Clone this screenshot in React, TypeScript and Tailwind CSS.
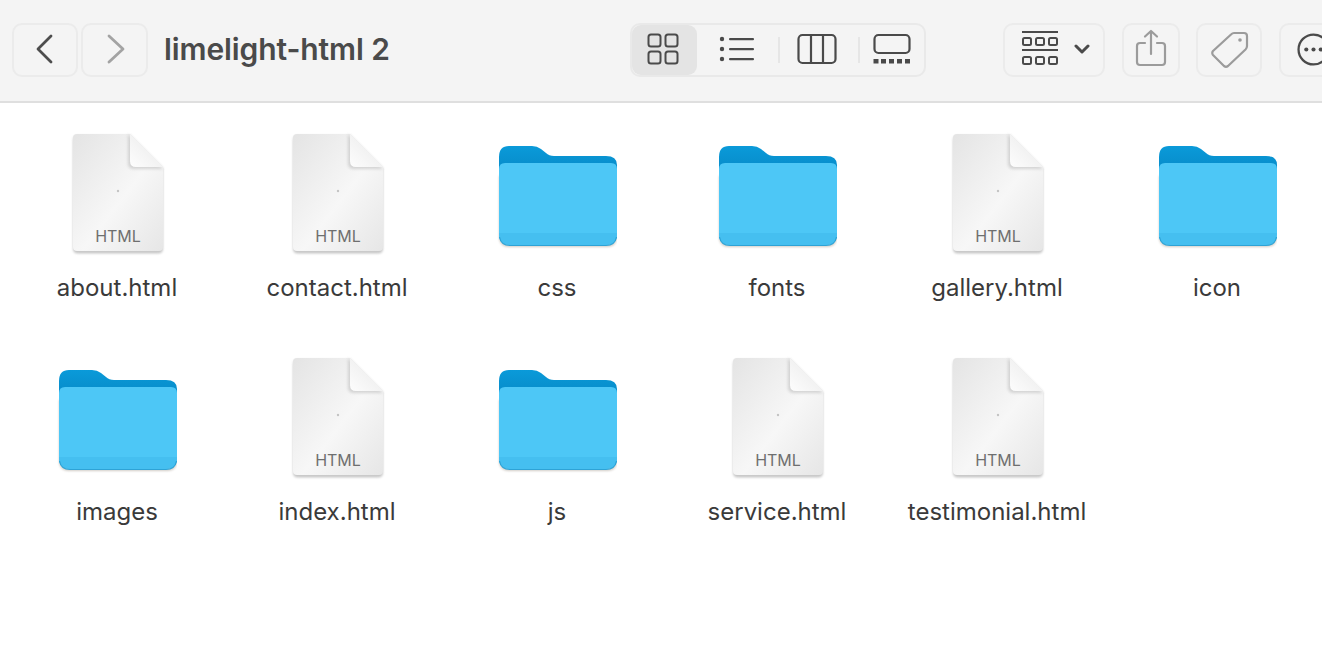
const font = "font-['Inter','Liberation_Sans',sans-serif]"

type Item = { name: string; kind: "file" | "folder" }

const items: Item[] = [
  { name: "about.html", kind: "file" },
  { name: "contact.html", kind: "file" },
  { name: "css", kind: "folder" },
  { name: "fonts", kind: "folder" },
  { name: "gallery.html", kind: "file" },
  { name: "icon", kind: "folder" },
  { name: "images", kind: "folder" },
  { name: "index.html", kind: "file" },
  { name: "js", kind: "folder" },
  { name: "service.html", kind: "file" },
  { name: "testimonial.html", kind: "file" },
]

function FileIcon({ id }: { id: string }) {
  return (
    <svg width="100" height="128" viewBox="-1 0 100 128" className="block">
      <defs>
        <linearGradient id={`page-${id}`} x1="0" y1="0" x2="1" y2="1">
          <stop offset="0" stopColor="#e4e4e4" />
          <stop offset="0.55" stopColor="#f7f7f7" />
          <stop offset="1" stopColor="#e6e6e6" />
        </linearGradient>
        <linearGradient id={`fold-${id}`} x1="0" y1="1" x2="1" y2="0">
          <stop offset="0" stopColor="#fdfdfd" />
          <stop offset="0.6" stopColor="#f0f0f0" />
          <stop offset="1" stopColor="#d4d4d4" />
        </linearGradient>
        <filter id={`soft-${id}`} x="-20%" y="-20%" width="140%" height="140%">
          <feGaussianBlur stdDeviation="0.9" />
        </filter>
        <filter id={`foldshade-${id}`} x="-30%" y="-30%" width="160%" height="160%">
          <feGaussianBlur stdDeviation="1.8" />
        </filter>
      </defs>
      <path d="M10 3 Q5 3 5 8 V116 Q5 121 10 121 H90 Q95 121 95 116 V36 L62 3 Z" fill="#b5b5b5" transform="translate(0 1.5)" filter={`url(#soft-${id})`} opacity="0.75" />
      <path d="M9 3 Q5 3 5 7 V116 Q5 120 9 120 H91 Q95 120 95 116 V36 L62 3 Z" fill={`url(#page-${id})`} />
      <path d="M60 3 V32 Q60 38 66 38 H95 Z" fill="#c4c4c4" filter={`url(#foldshade-${id})`} opacity="0.7" />
      <path d="M62 3 L95 36 H68 Q62 36 62 30 Z" fill={`url(#fold-${id})`} />
      <circle cx="50" cy="60" r="1.2" fill="#c4c4c4" />
    </svg>
  )
}

function FolderIcon({ id }: { id: string }) {
  return (
    <svg width="120" height="104" viewBox="-1 0 120 104" className="block">
      <defs>
        <linearGradient id={`tab-${id}`} x1="0" y1="0" x2="0" y2="1">
          <stop offset="0" stopColor="#0a9ad9" />
          <stop offset="1" stopColor="#0582bf" />
        </linearGradient>
        <filter id={`shade-${id}`} x="-10%" y="-10%" width="120%" height="120%">
          <feGaussianBlur stdDeviation="1.2" />
        </filter>
      </defs>
      <path d="M1 30 H119 V90 Q119 101 109 101 H11 Q1 101 1 90 Z" fill="#9a8f80" opacity="0.45" transform="translate(0 1)" filter={`url(#shade-${id})`} />
      <path d="M1 12 Q1 1 11 1 H34 Q39 1 43 4 L48 8 Q51 11 56 11 H108 Q119 11 119 20 V40 H1 Z" fill={`url(#tab-${id})`} />
      <path d="M1 24 Q1 18 7 18 H113 Q119 18 119 24 V89 Q119 100 108 100 H12 Q1 100 1 89 Z" fill="#4dc7f6" />
      <path d="M1 88 H119 V89 Q119 100 108 100 H12 Q1 100 1 89 Z" fill="#45bff0" />
      <path d="M1.5 92 Q3 100.5 12 100.5 H108 Q117 100.5 118.5 92" fill="none" stroke="#2ea3d6" strokeWidth="1.2" />
    </svg>
  )
}

function ToolButton({ className, children }: { className: string; children: React.ReactNode }) {
  return (
    <div className={`flex h-[54px] shrink-0 items-center justify-center rounded-[10px] border-2 border-[#ebebeb] pb-[2px] ${className}`}>
      {children}
    </div>
  )
}

function ViewGroup() {
  return (
    <div className="flex h-[54px] w-[296px] shrink-0 items-center rounded-[10px] border-2 border-[#e9e9e9] pb-0">
      <div className="flex h-full w-[65px] items-center justify-center rounded-[9px] bg-[#e4e4e4] pr-[3px] pb-[2px]">
        <svg width="32" height="32" viewBox="0 0 32 32" fill="none" stroke="#4a4a4a" strokeWidth="2">
          <rect x="1.5" y="1.5" width="12" height="12" rx="2.5" />
          <rect x="18.5" y="1.5" width="12" height="12" rx="2.5" />
          <rect x="1.5" y="18.5" width="12" height="12" rx="2.5" />
          <rect x="18.5" y="18.5" width="12" height="12" rx="2.5" />
        </svg>
      </div>
      <div className="flex w-[81px] items-center justify-center pr-[2px] pb-[2px]">
        <svg width="36" height="26" viewBox="0 0 36 26" fill="#4a4a4a">
          <circle cx="3" cy="3" r="2.2" />
          <circle cx="3" cy="13" r="2.2" />
          <circle cx="3" cy="23" r="2.2" />
          <rect x="10" y="2" width="25" height="2.2" rx="1" />
          <rect x="10" y="12" width="25" height="2.2" rx="1" />
          <rect x="10" y="22" width="25" height="2.2" rx="1" />
        </svg>
      </div>
      <div className="h-[26px] w-[2px] bg-[#e6e6e6]" />
      <div className="flex w-[78px] items-center justify-center pr-[4px] pb-[2px]">
        <svg width="40" height="32" viewBox="0 0 40 32" fill="none" stroke="#4a4a4a" strokeWidth="2.2">
          <rect x="1.5" y="2" width="37" height="28" rx="4" />
          <path d="M14 2 V30 M26 2 V30" />
        </svg>
      </div>
      <div className="h-[26px] w-[2px] bg-[#e6e6e6]" />
      <div className="flex flex-1 items-center justify-center pb-[2px]">
        <svg width="38" height="32" viewBox="0 0 38 32" fill="none">
          <rect x="1.5" y="2" width="35" height="18" rx="4" stroke="#4a4a4a" strokeWidth="2.2" />
          <g fill="#4a4a4a">
            <rect x="0.5" y="26" width="5" height="4.5" />
            <rect x="8" y="26" width="5" height="4.5" />
            <rect x="16" y="26" width="5" height="4.5" />
            <rect x="24" y="26" width="5" height="4.5" />
            <rect x="32" y="26" width="5" height="4.5" />
          </g>
        </svg>
      </div>
    </div>
  )
}

function Toolbar() {
  return (
    <div className="flex h-[103px] items-center overflow-hidden border-b-2 border-[#dfdfdf] bg-[#f4f4f4] pl-3 pb-[1px]">
      <ToolButton className="w-[66px]">
        <svg width="20" height="30" viewBox="0 0 20 30" fill="none" stroke="#4d4d4d" strokeWidth="2.8" strokeLinecap="round" strokeLinejoin="round">
          <path d="M16 2 L3 15 L16 28" />
        </svg>
      </ToolButton>
      <ToolButton className="ml-[3px] w-[67px]">
        <svg width="20" height="30" viewBox="0 0 20 30" fill="none" stroke="#a3a3a3" strokeWidth="2.8" strokeLinecap="round" strokeLinejoin="round">
          <path d="M4 2 L18 15 L4 28" />
        </svg>
      </ToolButton>
      <div className={`ml-[16px] w-[466px] shrink-0 pb-[2px] text-[30px] leading-none font-semibold tracking-[-0.1px] text-[#4a4a4a] ${font}`}>limelight-html 2</div>
      <ViewGroup />
      <ToolButton className="ml-[77px] w-[102px] pl-[3px]">
        <svg width="38" height="38" viewBox="0 0 38 38" fill="none" stroke="#4a4a4a" strokeWidth="2">
          <path d="M1 2 H37 M1 20 H37" strokeWidth="2.2" />
          <rect x="2" y="8" width="8" height="7" rx="1.5" />
          <rect x="15" y="8" width="8" height="7" rx="1.5" />
          <rect x="28" y="8" width="8" height="7" rx="1.5" />
          <rect x="2" y="27" width="8" height="7" rx="1.5" />
          <rect x="15" y="27" width="8" height="7" rx="1.5" />
          <rect x="28" y="27" width="8" height="7" rx="1.5" />
        </svg>
        <svg className="ml-[15px]" width="16" height="10" viewBox="0 0 16 10" fill="none" stroke="#4a4a4a" strokeWidth="3" strokeLinecap="round" strokeLinejoin="round">
          <path d="M2 2 L8 8 L14 2" />
        </svg>
      </ToolButton>
      <ToolButton className="ml-[17px] w-[58px]">
        <svg className="mb-[2px]" width="32" height="38" viewBox="0 0 32 38" fill="none" stroke="#9b9b9b" strokeWidth="2.2" strokeLinecap="round" strokeLinejoin="round">
          <path d="M10 14 H5 Q2 14 2 17 V33 Q2 36 5 36 H27 Q30 36 30 33 V17 Q30 14 27 14 H22" />
          <path d="M16 25 V2 M10 7.5 L16 2 L22 7.5" />
        </svg>
      </ToolButton>
      <ToolButton className="ml-[16px] w-[66px] pl-[2px]">
        <svg width="40" height="38" viewBox="0 0 40 38" fill="none" stroke="#9b9b9b" strokeWidth="2.2" strokeLinejoin="round">
          <path d="M24 3 H34 Q37 3 37 6 V16 Q37 18 35.5 19.5 L18 36 Q16 37.5 14 36 L3 25 Q1.5 23 3 21 L21 4.5 Q22.5 3 24 3 Z" />
          <circle cx="30" cy="10" r="1.8" fill="#9b9b9b" stroke="none" />
        </svg>
      </ToolButton>
      <ToolButton className="ml-[17px] w-[66px] shrink-0 justify-start pl-[16px]">
        <svg width="33" height="33" viewBox="0 0 32 32" fill="none" stroke="#4a4a4a" strokeWidth="2.2" className="shrink-0">
          <circle cx="16" cy="16" r="14.5" />
          <g fill="#4a4a4a" stroke="none">
            <circle cx="9" cy="16" r="2" />
            <circle cx="16" cy="16" r="2" />
            <circle cx="23" cy="16" r="2" />
          </g>
        </svg>
      </ToolButton>
    </div>
  )
}

function Tile({ item, id }: { item: Item; id: string }) {
  return (
    <div className="flex h-[224px] flex-col items-center">
      <div className="relative flex h-[126px] items-end justify-center">
        {item.kind === "file" ? <FileIcon id={id} /> : <div className="mb-[10px]"><FolderIcon id={id} /></div>}
        {item.kind === "file" && (
          <span className={`absolute bottom-[13px] left-0 ml-px w-full text-center text-[16px] leading-5 text-[#6f6f6f] ${font}`}>HTML</span>
        )}
      </div>
      <div className={`mt-[15px] text-[24px] leading-7 whitespace-nowrap text-[#3a3a3a] ${font}`}>{item.name}</div>
    </div>
  )
}

export default function App() {
  return (
    <div className="h-[646px] w-[1322px] overflow-hidden bg-white">
      <Toolbar />
      <div className="grid grid-cols-[repeat(6,220px)] pt-[30px] pl-[7px]">
        {items.map((item, i) => (
          <Tile key={item.name} item={item} id={String(i)} />
        ))}
      </div>
    </div>
  )
}
